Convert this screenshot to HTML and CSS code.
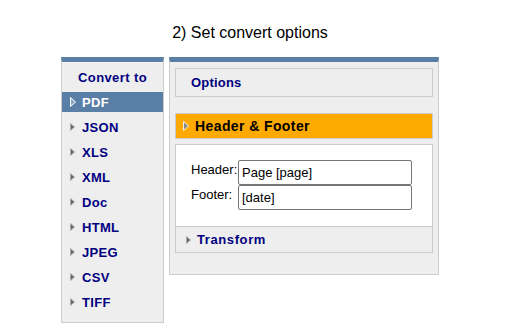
FILE: index.html
```html
<!DOCTYPE html>
<html lang="en">
    <head>
        <meta charset="utf-8">
        <title>Convert</title>
        <link rel="stylesheet" href="styles.css">
    </head>
    <body>
        <div class="wizard">
            <div class="step-title">2) Set convert options</div>

            <div class="step-body">
                <!-- 左边：格式列表 -->
                <div class="formats">
                    <div class="formats-title">Convert to</div>
                    <ul>
                        <li class="active"><svg class="arrow" width="6" height="10" viewBox="0 0 6 10"><polygon points="0.5,0.5 5.5,5 0.5,9.5" fill="#8ea5c0" stroke="#fff"/></svg>PDF</li>
                        <li><svg class="arrow" width="5" height="8" viewBox="0 0 5 8"><polygon points="0.5,0.5 4.5,4 0.5,7.5" fill="#666" stroke="#aaa"/></svg>JSON</li>
                        <li><svg class="arrow" width="5" height="8" viewBox="0 0 5 8"><polygon points="0.5,0.5 4.5,4 0.5,7.5" fill="#666" stroke="#aaa"/></svg>XLS</li>
                        <li><svg class="arrow" width="5" height="8" viewBox="0 0 5 8"><polygon points="0.5,0.5 4.5,4 0.5,7.5" fill="#666" stroke="#aaa"/></svg>XML</li>
                        <li><svg class="arrow" width="5" height="8" viewBox="0 0 5 8"><polygon points="0.5,0.5 4.5,4 0.5,7.5" fill="#666" stroke="#aaa"/></svg>Doc</li>
                        <li><svg class="arrow" width="5" height="8" viewBox="0 0 5 8"><polygon points="0.5,0.5 4.5,4 0.5,7.5" fill="#666" stroke="#aaa"/></svg>HTML</li>
                        <li><svg class="arrow" width="5" height="8" viewBox="0 0 5 8"><polygon points="0.5,0.5 4.5,4 0.5,7.5" fill="#666" stroke="#aaa"/></svg>JPEG</li>
                        <li><svg class="arrow" width="5" height="8" viewBox="0 0 5 8"><polygon points="0.5,0.5 4.5,4 0.5,7.5" fill="#666" stroke="#aaa"/></svg>CSV</li>
                        <li><svg class="arrow" width="5" height="8" viewBox="0 0 5 8"><polygon points="0.5,0.5 4.5,4 0.5,7.5" fill="#666" stroke="#aaa"/></svg>TIFF</li>
                    </ul>
                </div>

                <!-- 右边：选项 -->
                <div class="options">
                    <div class="options-title">Options</div>

                    <div class="section open">
                        <svg class="arrow" width="6" height="10" viewBox="0 0 6 10"><polygon points="0.5,0.5 5.5,5 0.5,9.5" fill="#888" stroke="#eee"/></svg>
                        Header &amp; Footer
                    </div>
                    <div class="section-body">
                        <label>Header:</label>
                        <input type="text" value="Page [page]">
                        <label>Footer:</label>
                        <input type="text" value="[date]">
                    </div>
                    <div class="section">
                        <svg class="arrow" width="5" height="8" viewBox="0 0 5 8"><polygon points="0.5,0.5 4.5,4 0.5,7.5" fill="#666" stroke="#aaa"/></svg>
                        Transform
                    </div>
                </div>
            </div>
        </div>
    </body>
</html>
```

FILE: styles.css
```css
*{
    margin: 0;
    box-sizing: border-box;
}
body{
    font-family: "Liberation Sans", Arial, sans-serif;
}
.wizard{
    width: 378px;
    margin-left: 61px;
    padding-top: 23px;
}
.step-title{
    height: 34px;
    font-size: 16px;
    line-height: 20px;
    text-align: center;
    color: #000;
}
.step-body{
    display: flex;
    align-items: flex-start;
    gap: 5px;
}

/*格式列表*/
.formats{
    width: 103px;
    background-color: #eeeeee;
    border: 1px solid #cccccc;
    border-top: 5px solid #5a7fa6;
    padding-bottom: 5px;
}
.formats-title{
    height: 30px;
    border-top: 1px solid #f6f6f6;
    display: flex;
    justify-content: center;
    align-items: center;
    font-size: 13px;
    font-weight: bold;
    letter-spacing: 0.4px;
    color: #000080;
}
.formats>ul{
    list-style: none;
    padding: 0;
}
.formats li{
    height: 20px;
    margin-bottom: 5px;
    padding-left: 8px;
    display: flex;
    align-items: center;
    gap: 7px;
    font-size: 13px;
    font-weight: bold;
    letter-spacing: 0.3px;
    color: #000080;
}
.formats li.active{
    background-color: #5a7fa6;
    color: #fff;
    gap: 6px;
}

/*选项*/
.options{
    width: 270px;
    background-color: #eeeeee;
    border: 1px solid #cccccc;
    border-top: 5px solid #5a7fa6;
    padding: 6px 5px 21px 5px;
}
.options-title{
    height: 29px;
    border: 1px solid #cccccc;
    padding-left: 15px;
    display: flex;
    align-items: center;
    font-size: 13px;
    font-weight: bold;
    letter-spacing: 0.2px;
    color: #000080;
}
.section{
    height: 26px;
    border: 1px solid #cccccc;
    padding-left: 10px;
    display: flex;
    align-items: center;
    gap: 6px;
    font-size: 13px;
    font-weight: bold;
    letter-spacing: 0.6px;
    color: #000080;
}
.section.open{
    margin-top: 16px;
    padding-left: 7px;
    background-color: #ffaa00;
    color: #000;
    font-size: 14px;
    letter-spacing: 0.4px;
}
.section-body{
    margin-top: 5px;
    background-color: #fff;
    border: 1px solid #cccccc;
    padding: 15px 0 16px 15px;
    display: grid;
    grid-template-columns: 47px 174px;
}
.section-body + .section{
    border-top: none;
}
.section-body label{
    padding-top: 2px;
    font-size: 13px;
    line-height: 16px;
    color: #000;
}
.section-body input{
    width: 174px;
    height: 25px;
    border: 1px solid #777;
    border-radius: 2px;
    padding: 0 3px;
    font-family: "Liberation Sans", Arial, sans-serif;
    font-size: 13px;
    color: #000;
}
```
